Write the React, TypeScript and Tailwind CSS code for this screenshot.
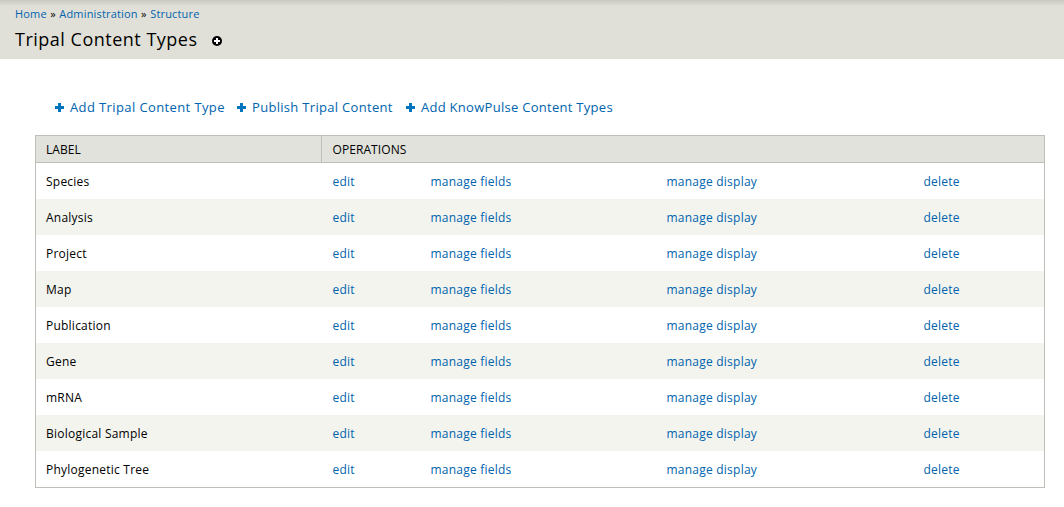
const rows = ['Species', 'Analysis', 'Project', 'Map', 'Publication', 'Gene', 'mRNA', 'Biological Sample', 'Phylogenetic Tree'];

const actions = [
  { label: 'Add Tripal Content Type', box: 'w-[182px] tracking-[0.39px]' },
  { label: 'Publish Tripal Content', box: 'w-[169px] tracking-[0.31px]' },
  { label: 'Add KnowPulse Content Types', box: 'w-[220px] tracking-[0.28px]' },
];

const operations = ['edit', 'manage fields', 'manage display', 'delete'];

export default function App() {
  return (
    <div className="h-[507px] w-[1064px] overflow-hidden bg-white font-['Open_Sans','Noto_Sans',sans-serif] text-[12px] text-black">
      <header className="h-[59px] bg-[#e0e0d8] bg-linear-to-b from-[#c8c8c2] to-[#e0e0d8] to-[6px] pl-[15px] pt-[6px]">
        <nav className="flex h-4 items-center gap-[3.5px] text-[11px] leading-4 tracking-[0.16px]">
          <a className="text-[#0063ad]">Home</a>
          <span>»</span>
          <a className="text-[#0063ad]">Administration</a>
          <span>»</span>
          <a className="text-[#0063ad]">Structure</a>
        </nav>
        <div className="flex h-9 items-center">
          <h1 className="w-[197px] pb-[2px] text-[18px] leading-6 tracking-[0.5px] whitespace-nowrap">Tripal Content Types</h1>
          <svg className="mt-px" width="10" height="10" viewBox="0 0 10 10">
            <circle cx="5" cy="5" r="5" fill="#000" />
            <path d="M5 2v6M2 5h6" stroke="#fff" strokeWidth="2" />
          </svg>
        </div>
      </header>
      <ul className="flex h-[76px] items-center pl-[55px] pt-[21px] text-[13px] text-[#0063ad]">
        {actions.map((a) => (
          <li key={a.label} className={`flex items-center gap-[6px] whitespace-nowrap ${a.box}`}>
            <svg width="9" height="9" viewBox="0 0 9 9">
              <path d="M4.5 0v9M0 4.5h9" stroke="#0074bd" strokeWidth="3" />
            </svg>
            {a.label}
          </li>
        ))}
      </ul>
      <table className="ml-[35px] w-[1010px] table-fixed border-collapse border border-[#bebfb9] leading-4 tracking-[0.23px]">
        <colgroup>
          <col className="w-[286px]" /><col className="w-[99px]" /><col className="w-[236px]" /><col className="w-[257px]" /><col />
        </colgroup>
        <thead>
          <tr className="h-[27px] border-b border-[#bebfb9] bg-[#e1e2dc] text-left tracking-[0.08px]">
            <th className="border-r border-[#bebfb9] pt-[2px] pl-[10px] font-normal">LABEL</th>
            <th colSpan={4} className="pt-[2px] pl-[10.5px] font-normal">OPERATIONS</th>
          </tr>
        </thead>
        <tbody>
          {rows.map((r) => (
            <tr key={r} className="h-9 odd:bg-white even:bg-[#f3f4ee] last:h-[37px]">
              <td className="pt-[2px] pl-[10px]">{r}</td>
              {operations.map((op) => (
                <td key={op} className="pt-[2px] pl-[10px] text-[#0063ad] nth-2:pl-[11px]">{op}</td>
              ))}
            </tr>
          ))}
        </tbody>
      </table>
    </div>
  );
}
